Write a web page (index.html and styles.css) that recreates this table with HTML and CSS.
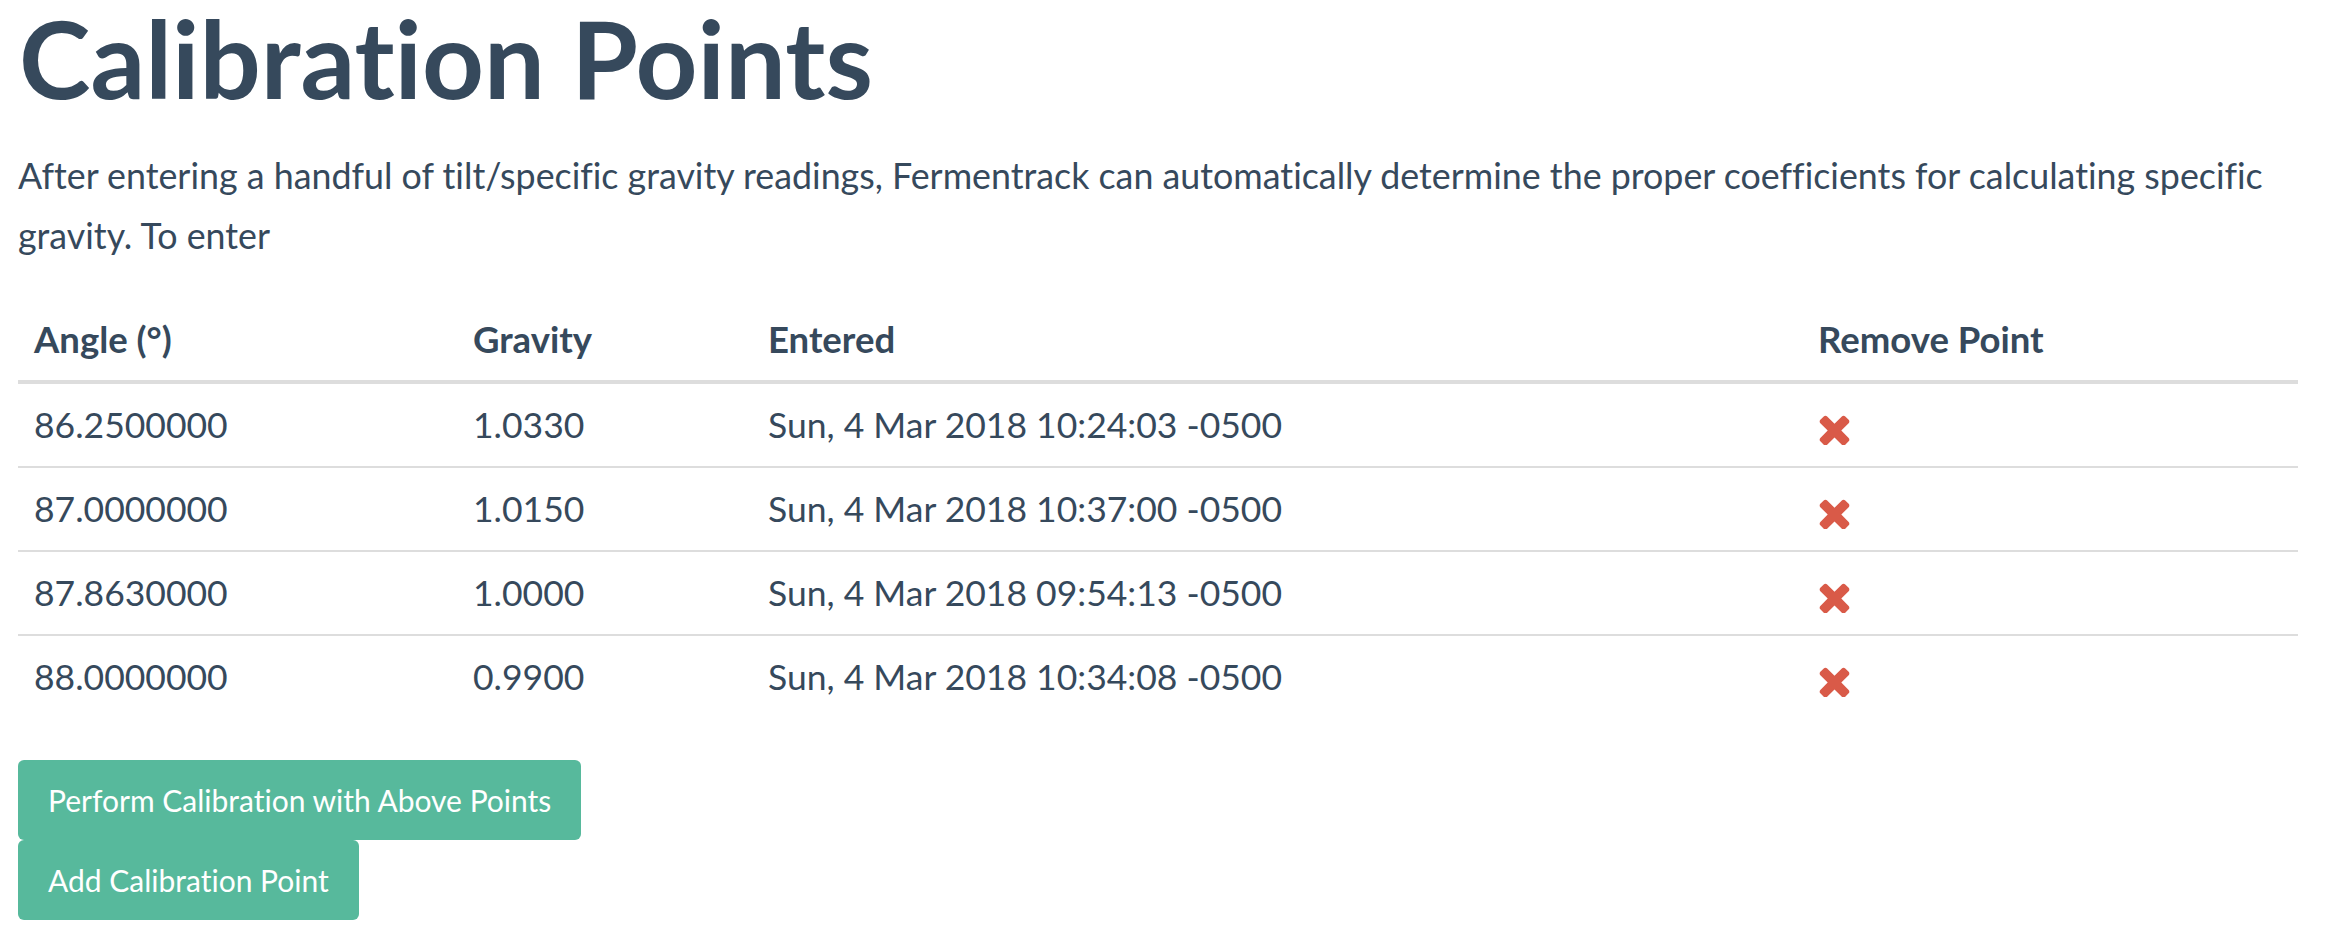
FILE: index.html
```html
<!DOCTYPE html>
<html>
<head>
<meta charset="utf-8">
<link rel="stylesheet" href="styles.css">
</head>
<body>
<div class="container">
  <h1 class="title">Calibration Points</h1>
  <p class="lead">After entering a handful of tilt/specific gravity readings, Fermentrack can automatically determine the proper coefficients for calculating specific gravity. To enter</p>
  <table class="points">
    <colgroup>
      <col class="c1"><col class="c2"><col class="c3"><col class="c4">
    </colgroup>
    <thead>
      <tr><th>Angle (°)</th><th>Gravity</th><th>Entered</th><th>Remove Point</th></tr>
    </thead>
    <tbody>
      <tr><td>86.2500000</td><td>1.0330</td><td>Sun, 4 Mar 2018 10:24:03 -0500</td><td><svg class="x" viewBox="100 256 1208 1280"><path d="M1298 1322q0 40-28 68l-136 136q-28 28-68 28t-68-28l-294-294-294 294q-28 28-68 28t-68-28l-136-136q-28-28-28-68t28-68l294-294-294-294q-28-28-28-68t28-68l136-136q28-28 68-28t68 28l294 294 294-294q28-28 68-28t68 28l136 136q28 28 28 68t-28 68l-294 294 294 294q28 28 28 68z"/></svg></td></tr>
      <tr><td>87.0000000</td><td>1.0150</td><td>Sun, 4 Mar 2018 10:37:00 -0500</td><td><svg class="x" viewBox="100 256 1208 1280"><path d="M1298 1322q0 40-28 68l-136 136q-28 28-68 28t-68-28l-294-294-294 294q-28 28-68 28t-68-28l-136-136q-28-28-28-68t28-68l294-294-294-294q-28-28-28-68t28-68l136-136q28-28 68-28t68 28l294 294 294-294q28-28 68-28t68 28l136 136q28 28 28 68t-28 68l-294 294 294 294q28 28 28 68z"/></svg></td></tr>
      <tr><td>87.8630000</td><td>1.0000</td><td>Sun, 4 Mar 2018 09:54:13 -0500</td><td><svg class="x" viewBox="100 256 1208 1280"><path d="M1298 1322q0 40-28 68l-136 136q-28 28-68 28t-68-28l-294-294-294 294q-28 28-68 28t-68-28l-136-136q-28-28-28-68t28-68l294-294-294-294q-28-28-28-68t28-68l136-136q28-28 68-28t68 28l294 294 294-294q28-28 68-28t68 28l136 136q28 28 28 68t-28 68l-294 294 294 294q28 28 28 68z"/></svg></td></tr>
      <tr><td>88.0000000</td><td>0.9900</td><td>Sun, 4 Mar 2018 10:34:08 -0500</td><td><svg class="x" viewBox="100 256 1208 1280"><path d="M1298 1322q0 40-28 68l-136 136q-28 28-68 28t-68-28l-294-294-294 294q-28 28-68 28t-68-28l-136-136q-28-28-28-68t28-68l294-294-294-294q-28-28-28-68t28-68l136-136q28-28 68-28t68 28l294 294 294-294q28-28 68-28t68 28l136 136q28 28 28 68t-28 68l-294 294 294 294q28 28 28 68z"/></svg></td></tr>
    </tbody>
  </table>
  <div class="actions">
    <a class="btn">Perform Calibration with Above Points</a>
    <a class="btn">Add Calibration Point</a>
  </div>
</div>
</body>
</html>
```
FILE: styles.css
```css
html, body {
  margin: 0;
  padding: 0;
  background: #ffffff;
}
body {
  font-family: Lato, "Noto Sans", sans-serif;
  color: #36495c;
  font-variant-ligatures: none;
}
.container {
  width: 2280px;
  padding-left: 18px;
}
.title {
  margin: 0;
  font-size: 108px;
  line-height: 115px;
  font-weight: 700;
  padding-left: 1px;
}
.lead {
  margin: 31px 0 0 0;
  font-size: 35.8px;
  line-height: 60px;
}
.points {
  margin-top: 32px;
  width: 2280px;
  border-collapse: collapse;
  table-layout: fixed;
  font-size: 35.5px;
  line-height: 48px;
}
.c1 { width: 439px; }
.c2 { width: 295px; }
.c3 { width: 1050px; }
.c4 { width: 496px; }
.points th {
  text-align: left;
  font-weight: 700;
  font-size: 36.5px;
  padding: 17px 16px;
  border-bottom: 4px solid #dddddd;
}
.points td {
  padding: 17px 16px;
  border-top: 2px solid #dddddd;
  vertical-align: top;
}
.points tbody tr:first-child td {
  border-top: 0;
}
.x {
  width: 31px;
  height: 32px;
  display: block;
  margin-top: 12px;
  margin-left: 1px;
  fill: #d95a48;
}
.actions {
  margin-top: 42px;
  display: flex;
  flex-direction: column;
  align-items: flex-start;
}
.btn {
  display: block;
  background: #57b99c;
  color: #ffffff;
  font-size: 30px;
  line-height: 40px;
  padding: 20px 30px;
  border-radius: 6px;
}
```
